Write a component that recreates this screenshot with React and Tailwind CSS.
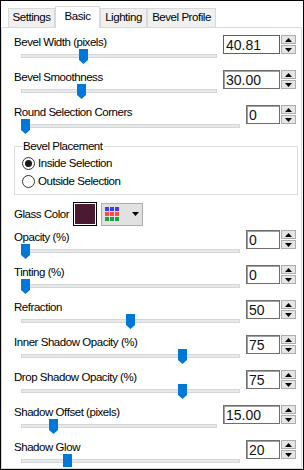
import clsx from "clsx";

const topRows = [
  { label: "Bevel Width (pixels)", value: "40.81", wide: true, focus: true, thumb: "left-[57px]" },
  { label: "Bevel Smoothness", value: "30.00", wide: true, thumb: "left-[55px]" },
  { label: "Round Selection Corners", value: "0", thumb: "left-[-1px]" },
];

const bottomRows = [
  { label: "Opacity (%)", value: "0", thumb: "left-[-1px]" },
  { label: "Tinting (%)", value: "0", thumb: "left-[-1px]" },
  { label: "Refraction", value: "50", thumb: "left-[104px]" },
  { label: "Inner Shadow Opacity (%)", value: "75", thumb: "left-[156px]" },
  { label: "Drop Shadow Opacity (%)", value: "75", thumb: "left-[156px]" },
  { label: "Shadow Offset (pixels)", value: "15.00", wide: true, thumb: "left-[27px]" },
  { label: "Shadow Glow", value: "20", thumb: "left-[41px]", flat: true },
];

const tabs = [
  { name: "Settings", w: "w-[47px]" },
  { name: "Basic", w: "w-[45px]", active: true },
  { name: "Lighting", w: "w-[47px]" },
  { name: "Bevel Profile", w: "w-[69px]" },
];

function Spinner() {
  return (
    <div className="ml-px flex h-[19px] w-[15px] flex-col gap-px">
      <div className="flex flex-1 items-center justify-center border border-[#adadad] bg-[#e5e5e5]">
        <svg width="7" height="4" viewBox="0 0 7 4">
          <path d="M3.5 0L7 4H0Z" fill="#000" />
        </svg>
      </div>
      <div className="flex flex-1 items-center justify-center border border-[#adadad] bg-[#e5e5e5]">
        <svg width="7" height="4" viewBox="0 0 7 4">
          <path d="M0 0H7L3.5 4Z" fill="#000" />
        </svg>
      </div>
    </div>
  );
}

function SliderRow({ label, value, wide, focus, thumb, flat }) {
  return (
    <div className="h-[35px] pl-[12px] pr-[5px]">
      <div className="flex h-[19px] items-start">
        <span className="flex-1 leading-[15px]">{label}</span>
        <div
          className={clsx(
            "flex h-[19px] items-center border pl-[2px] text-[14px] leading-none tracking-normal text-[#111]",
            wide ? "w-[57px]" : "w-[34px]",
            focus
              ? "border-[#0078d7]"
              : "border-[#6e6e6e] shadow-[inset_1px_1px_0_#a0a0a0]"
          )}
        >
          {value}
        </div>
        <Spinner />
      </div>
      <div
        className={clsx(
          "relative ml-[7px] h-[4px] border border-[#d6d6d6] bg-[#e7eaea]",
          wide ? "w-[196px]" : "w-[219px]"
        )}
      >
        <svg
          className={clsx("absolute top-[-6px]", thumb)}
          width="9"
          height="15"
          viewBox="0 0 9 15"
        >
          {flat ? (
            <path d="M0 0H9V13H0Z" fill="#0078d7" />
          ) : (
            <path d="M0 0H9V11L4.5 15L0 11Z" fill="#0078d7" />
          )}
        </svg>
      </div>
    </div>
  );
}

function Radio({ checked, label }) {
  return (
    <div className="flex h-[18px] items-center">
      <div className="flex h-[13px] w-[13px] items-center justify-center rounded-full border border-[#333] bg-white">
        {checked && <div className="h-[7px] w-[7px] rounded-full bg-[#1a1a1a]" />}
      </div>
      <span className="ml-[3px] leading-[15px]">{label}</span>
    </div>
  );
}

export default function App() {
  return (
    <div className="flex h-[470px] w-[304px] flex-col overflow-hidden border border-black bg-white font-['Liberation_Sans',Arial,sans-serif] text-[11.5px] tracking-[-0.45px] text-black">
      {/* Tabs */}
      <div className="flex h-[26px] items-end pl-[7px]">
        {tabs.map((t) => (
          <div
            key={t.name}
            className={clsx(
              "flex items-center justify-center border-x border-t border-[#d9d9d9]",
              t.w,
              t.active
                ? "relative z-10 -mb-px h-[22px] bg-white pb-[2px]"
                : "h-[19px] bg-[#f0f0f0]"
            )}
          >
            {t.name}
          </div>
        ))}
      </div>

      {/* Panel */}
      <div className="mr-px flex-1 overflow-hidden border border-[#d9d9d9] pt-[7px]">
        {topRows.map((r) => (
          <SliderRow key={r.label} {...r} />
        ))}

        <fieldset className="-mt-px ml-[12px] w-[284px] border border-[#dcdcdc] pb-[4px] pl-[7px]">
          <legend className="px-px leading-[15px]">Bevel Placement</legend>
          <Radio checked label="Inside Selection" />
          <Radio label="Outside Selection" />
        </fieldset>

        <div className="mt-[7px] flex h-[24px] items-center pl-[12px]">
          <span className="w-[59px] leading-[15px]">Glass Color</span>
          <div className="h-[24px] w-[24px] border border-black bg-white p-px">
            <div className="h-full w-full bg-[#4b1a30]" />
          </div>
          <div className="ml-[4px] flex h-[23px] w-[42px] items-center border border-[#adadad] bg-[#e1e1e1] pl-[3px]">
            <div className="grid grid-cols-3 gap-px">
              <div className="h-[4px] w-[4px] bg-[#3a3aff]" />
              <div className="h-[4px] w-[4px] bg-[#3a3aff]" />
              <div className="h-[4px] w-[4px] bg-[#3a3aff]" />
              <div className="h-[4px] w-[4px] bg-[#ff4a4a]" />
              <div className="h-[4px] w-[4px] bg-[#ff4a4a]" />
              <div className="h-[4px] w-[4px] bg-[#ff4a4a]" />
              <div className="h-[4px] w-[4px] bg-[#22a040]" />
              <div className="h-[4px] w-[4px] bg-[#22a040]" />
              <div className="h-[4px] w-[4px] bg-[#22a040]" />
            </div>
            <svg className="ml-[13px]" width="7" height="4" viewBox="0 0 7 4">
              <path d="M0 0H7L3.5 4Z" fill="#000" />
            </svg>
          </div>
        </div>

        <div className="mt-[4px]">
          {bottomRows.map((r) => (
            <SliderRow key={r.label} {...r} />
          ))}
        </div>
      </div>
    </div>
  );
}
